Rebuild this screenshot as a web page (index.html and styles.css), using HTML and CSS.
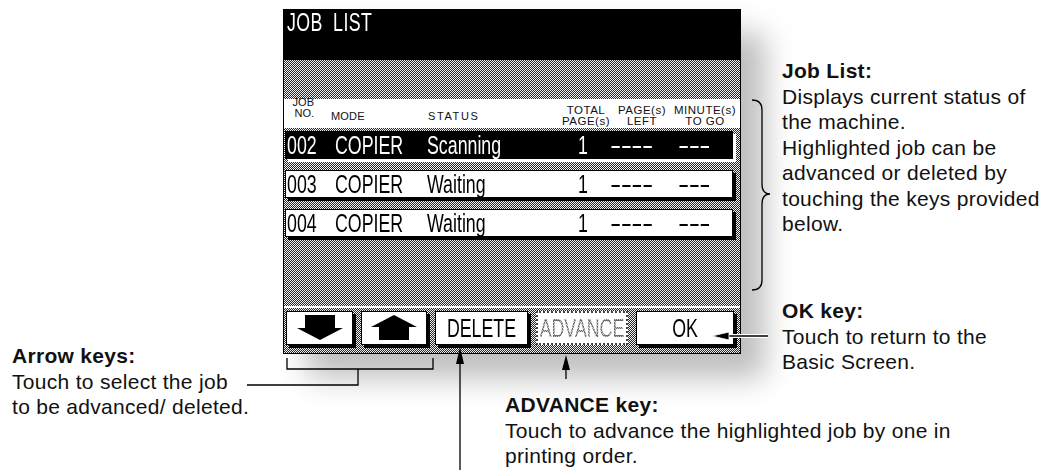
FILE: index.html
```html
<!DOCTYPE html>
<html lang="en">
<head>
<meta charset="utf-8">
<title>Job List</title>
<link rel="stylesheet" href="styles.css">
</head>
<body>
<div class="page">
  <div class="screen">
    <div class="title"><span class="lcd t-text">JOB LIST</span></div>
    <div class="panel">
      <div class="band"></div>
      <div class="head">
        <div class="h-job">JOB<br>NO.</div>
        <div class="h-mode">MODE</div>
        <div class="h-status">STATUS</div>
        <div class="h-c">TOTAL<br>PAGE(s)</div>
        <div class="h-c">PAGE(s)<br>LEFT</div>
        <div class="h-c">MINUTE(s)<br>TO GO</div>
      </div>
      <div class="rows">
        <div class="row sel">
          <span class="lcd">002</span><span class="lcd">COPIER</span><span class="lcd">Scanning</span><span class="lcd">1</span><span class="lcd dash">----</span><span class="lcd dash">---</span>
        </div>
        <div class="row">
          <span class="lcd">003</span><span class="lcd">COPIER</span><span class="lcd">Waiting</span><span class="lcd">1</span><span class="lcd dash">----</span><span class="lcd dash">---</span>
        </div>
        <div class="row">
          <span class="lcd">004</span><span class="lcd">COPIER</span><span class="lcd">Waiting</span><span class="lcd">1</span><span class="lcd dash">----</span><span class="lcd dash">---</span>
        </div>
      </div>
      <div class="keys">
        <div class="key k-arrow">
          <svg width="46" height="26" viewBox="0 0 46 26"><polygon points="8,0 38,0 38,13 46,13 23,25 0,13 8,13" fill="#000"/></svg>
        </div>
        <div class="key k-arrow2">
          <svg width="46" height="26" viewBox="0 0 46 26"><polygon points="23,0 46,12 38,12 38,25 8,25 8,12 0,12" fill="#000"/></svg>
        </div>
        <div class="key k-del"><span class="lcd">DELETE</span></div>
        <div class="key k-adv off"><span class="lcd">ADVANCE</span></div>
        <div class="key k-ok"><span class="lcd">OK</span></div>
      </div>
    </div>
  </div>

  <div class="note note-list">
    <b>Job List:</b>
    Displays current status of<br>
    the machine.<br>
    Highlighted job can be<br>
    advanced or deleted by<br>
    touching the keys provided<br>
    below.
  </div>
  <div class="note note-ok">
    <b>OK key:</b>
    Touch to return to the<br>
    Basic Screen.
  </div>
  <div class="note note-arrow">
    <b>Arrow keys:</b>
    Touch to select the job<br>
    to be advanced/ deleted.
  </div>
  <div class="note note-adv">
    <b>ADVANCE key:</b>
    Touch to advance the highlighted job by one in<br>
    printing order.
  </div>

  <svg class="leaders" width="1051" height="470" viewBox="0 0 1051 470">
    <g fill="none" stroke="#000" stroke-width="1.3">
      <path d="M752,100 Q762,100 762,110 L762,184 Q762,194 770,194 Q762,194 762,204 L762,280 Q762,290 752,290"/>
      <path d="M287,358 V369 H433 V358"/>
      <path d="M358,369 V385 H247"/>
      <path d="M460,470 V360"/>
      <path d="M566,379 V368"/>
    </g>
    <path d="M726,336 H768" stroke="#fff" stroke-width="4"/>
    <path d="M724,336 H768" stroke="#000" stroke-width="1.3"/>
    <polygon points="712,336 729,332 729,340" fill="#000" stroke="#fff" stroke-width="0.8"/>
    <polygon points="460,347 456,364 464,364" fill="#000"/>
    <polygon points="566,355 562,370 570,370" fill="#000"/>
  </svg>
</div>
</body>
</html>
```

FILE: styles.css
```css
body {
  margin: 0;
  background: #fff;
}

.page {
  position: relative;
  width: 1051px;
  height: 470px;
  overflow: hidden;
  box-sizing: border-box;
  padding: 9px 0 0 283px;
  font-family: "Liberation Sans", Arial, Helvetica, sans-serif;
  color: #000;
}

/* ---------- LCD screen ---------- */
.screen {
  width: 458px;
  height: 345px;
  box-sizing: border-box;
  border: 1px solid #000;
  display: flex;
  flex-direction: column;
  box-shadow: 24px 24px 28px rgba(0, 0, 0, 0.26);
  background: #fff;
}

.lcd {
  font-family: "Liberation Sans", Arial, sans-serif;
  font-size: 17.8px;
  line-height: 18px;
  display: inline-block;
  transform: scaleY(1.5);
  white-space: pre;
}

.title {
  height: 50px;
  background: #000;
  color: #fff;
  display: flex;
  align-items: flex-start;
  padding: 3px 3px 0;
  box-sizing: border-box;
}

.t-text {
  word-spacing: 5px;
  letter-spacing: 0.4px;
}

.panel {
  flex: 1;
  display: flex;
  flex-direction: column;
  background: repeating-conic-gradient(#262626 0 25%, #f2f2f2 0 50%) 0 0 / 2px 2px;
}

.band {
  height: 39px;
}

.head {
  height: 29px;
  background: #fff;
  display: grid;
  grid-template-columns: 47px 97px 130px 56px 56px 1fr;
  font-size: 11.5px;
  letter-spacing: 0.5px;
  white-space: nowrap;
  color: #111;
}

.h-job {
  align-self: start;
  justify-self: end;
  margin: -2px 17px 0 0;
  text-align: right;
  line-height: 11px;
  font-size: 11px;
  letter-spacing: 0;
}

.h-mode,
.h-status {
  align-self: end;
  margin-bottom: 7px;
  line-height: 10px;
  font-size: 11px;
  letter-spacing: 0.2px;
}

.h-status {
  letter-spacing: 1.6px;
}

.h-c {
  align-self: end;
  margin-bottom: 1px;
  line-height: 11px;
  text-align: center;
}

.rows {
  display: flex;
  flex-direction: column;
  gap: 11px;
  margin-top: 3px;
}

.row {
  box-sizing: border-box;
  height: 28px;
  width: 448px;
  margin-left: 1px;
  padding-left: 1px;
  background: #fff;
  color: #000;
  border: 1px solid #000;
  box-shadow: 3px 3px 0 #000;
  display: grid;
  grid-template-columns: 48px 92px 151px 32px 68px 1fr;
  align-items: center;
}

.row.sel {
  background: #000;
  color: #fff;
  box-shadow: 3px 3px 0 #fff;
}

.dash {
  justify-self: start;
  transform: scale(1.9, 1.5);
  transform-origin: left center;
  letter-spacing: -0.3px;
}

.keys {
  margin-top: auto;
  border-top: 2px solid #fff;
  padding: 3px 0 8px 2px;
  display: flex;
  gap: 8px;
}

.key {
  box-sizing: border-box;
  height: 34px;
  background: #fff;
  border: 1px solid #000;
  box-shadow: 3px 3px 0 #000;
  display: flex;
  align-items: center;
  justify-content: center;
  color: #000;
}

.k-arrow { width: 67px; }
.k-arrow2 { width: 66px; }
.k-del { width: 93px; }
.k-adv { width: 92px; }
.k-ok { width: 98px; }

.key svg {
  display: block;
}

.key.off {
  border: 2px dotted #444;
  box-shadow: none;
}

.key.off .lcd {
  color: transparent;
  background: repeating-conic-gradient(#111 0 25%, #c8c8c8 0 50%) 0 0 / 2px 2px;
  -webkit-background-clip: text;
  background-clip: text;
}

/* ---------- callouts ---------- */
.note {
  position: absolute;
  font-size: 21px;
  line-height: 25.5px;
  letter-spacing: 0.3px;
  white-space: nowrap;
  color: #111;
}

.note b {
  display: block;
  font-weight: bold;
}

.note-list { left: 782px; top: 58px; }
.note-ok { left: 782px; top: 298px; }
.note-arrow { left: 12px; top: 343px; }
.note-adv { left: 505px; top: 392px; }

.leaders {
  position: absolute;
  left: 0;
  top: 0;
  pointer-events: none;
}
```
